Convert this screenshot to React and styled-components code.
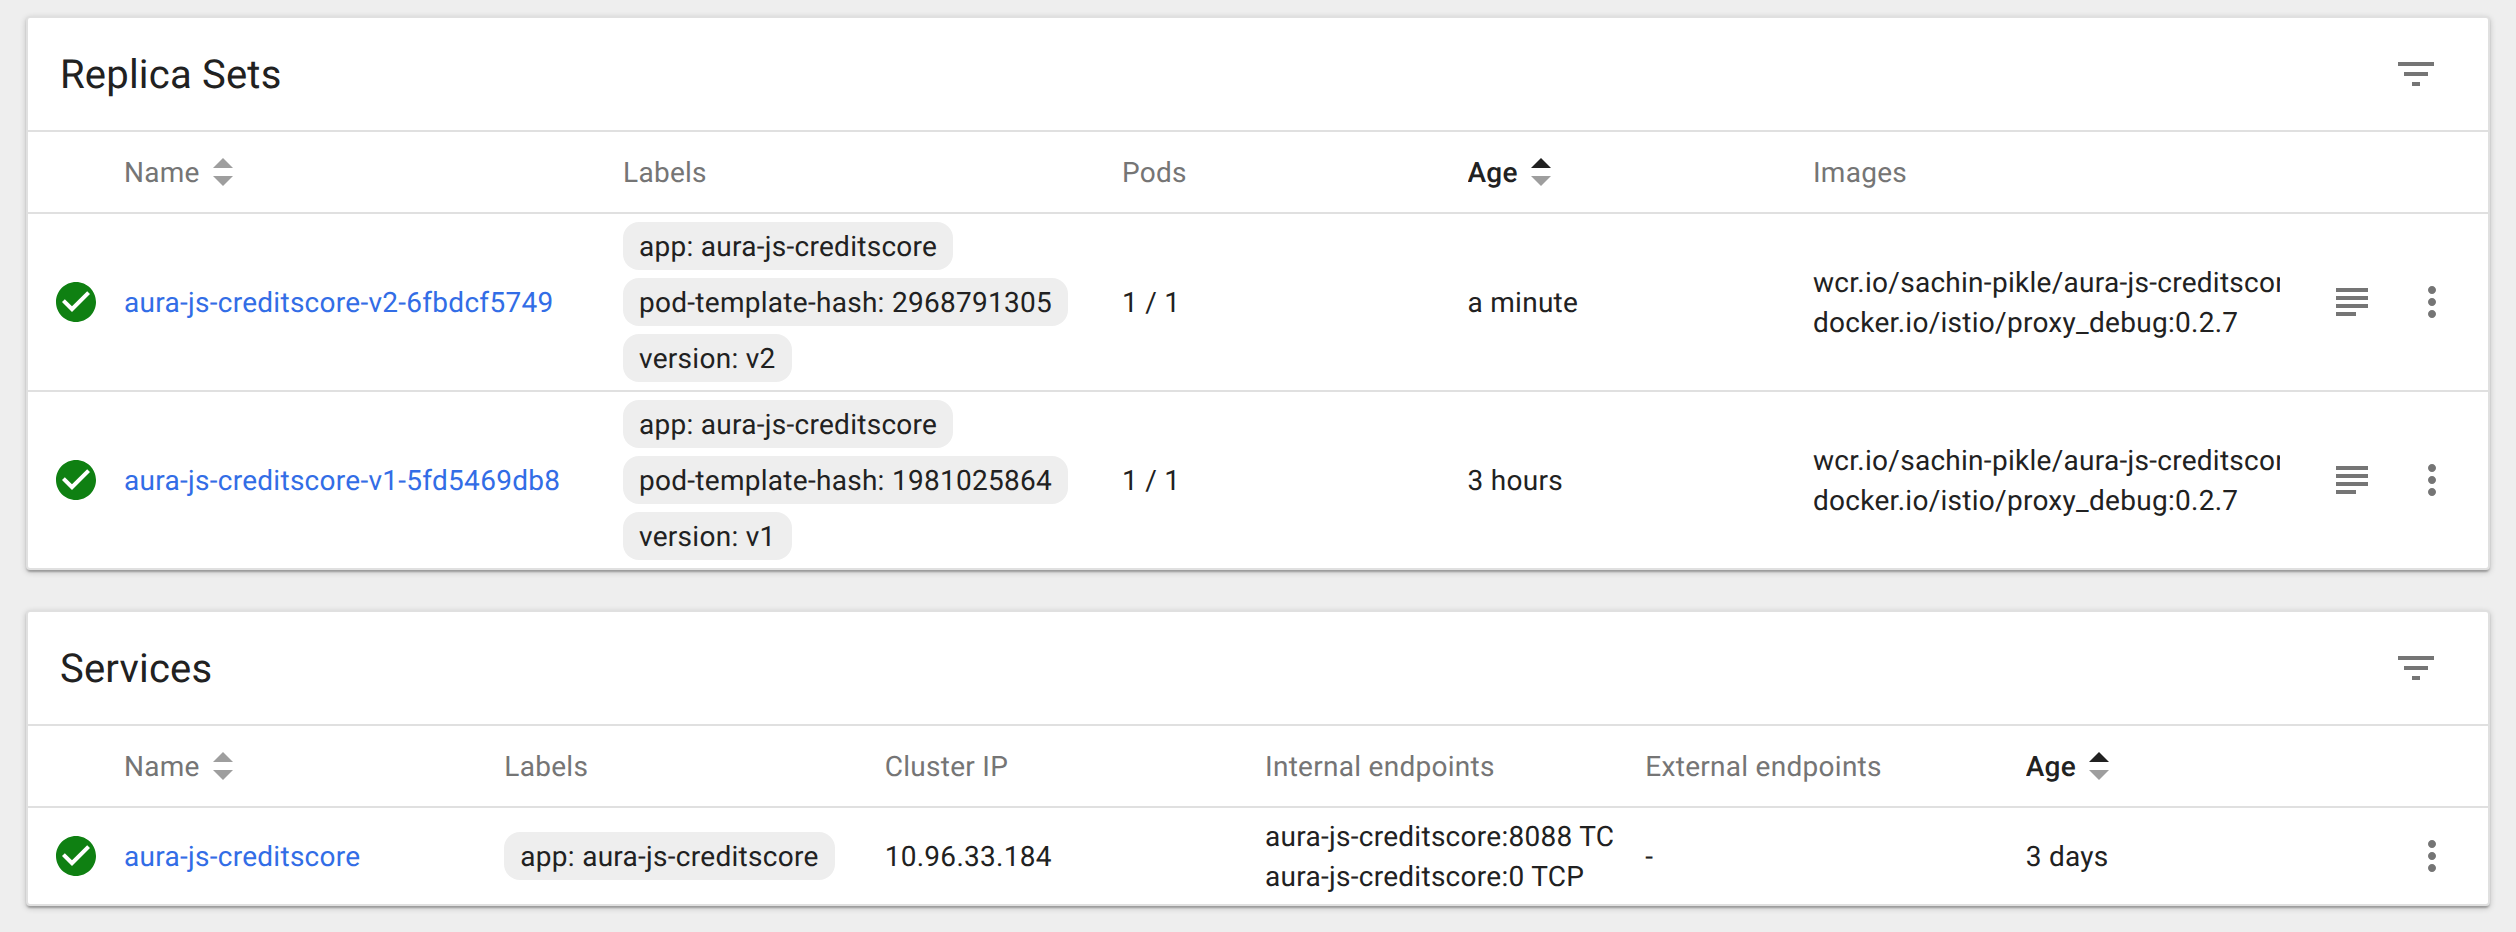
import React from "react";
import styled, { createGlobalStyle } from "styled-components";

const GlobalStyle = createGlobalStyle`
  body {
    margin: 0;
    background: #eeeeee;
    color: #212121;
    font: 400 28px/40px Roboto, sans-serif;
    letter-spacing: 0.01em;
    text-rendering: geometricPrecision;
  }
`;

const Page = styled.main`
  box-sizing: border-box;
  min-height: 932px;
  padding: 16px 26px 26px;
  display: flex;
  flex-direction: column;
  gap: 40px;
`;

const Card = styled.section`
  background: #fff;
  border: 2px solid #e0e0e0;
  border-radius: 4px;
  box-shadow: 0 2px 6px rgba(0, 0, 0, 0.2), 0 2px 2px rgba(0, 0, 0, 0.14), 0 4px 2px -2px rgba(0, 0, 0, 0.12);
`;

const CardHeader = styled.header`
  height: 112px;
  padding: 0 54px 0 32px;
  display: flex;
  align-items: center;
  justify-content: space-between;
`;

const Title = styled.h2`
  margin: 0;
  padding-top: 2px;
  font-size: 40px;
  font-weight: 400;
  letter-spacing: 0.005em;
`;

const Row = styled.div`
  display: grid;
  grid-template-columns: ${(p) => p.$columns};
  align-items: center;
  border-top: 2px solid #e0e0e0;
  min-height: ${(p) => p.$height}px;
`;

const Cell = styled.div`
  min-width: 0;
  padding: 2px 32px 0 0;
  overflow: hidden;
  white-space: nowrap;
`;

const ChipCell = styled(Cell)`
  padding-top: 0;
`;

const HeadCell = styled(Cell)`
  padding-top: 0;
  display: flex;
  align-items: center;
  color: ${(p) => (p.$active ? "#212121" : "#757575")};
  font-weight: ${(p) => (p.$active ? 500 : 400)};
`;

const HeadLabel = styled.span`
  padding-top: 2px;
`;

const Line = styled.div`
  overflow: hidden;
`;

const StatusCell = styled.div`
  padding-left: 24px;
  display: flex;
`;

const Link = styled.a`
  color: #326de6;
  text-decoration: none;
`;

const Chips = styled.div`
  display: flex;
  flex-direction: column;
  align-items: flex-start;
  gap: 8px;
`;

const Chip = styled.span`
  height: 48px;
  line-height: 50px;
  padding: 0 16px;
  border-radius: 16px;
  background: #eeeeee;
`;

const Actions = styled.div`
  display: flex;
  justify-content: flex-end;
  gap: 32px;
  padding-right: 32px;
`;

const IconButton = styled.button`
  padding: 0;
  border: 0;
  background: none;
  color: #757575;
  display: flex;
`;

const SortIcon = styled.svg`
  margin-left: 13px;
  flex: none;
`;

const Icon = ({ d, color = "currentColor" }) => (
  <svg width="48" height="48" viewBox="0 0 24 24" fill={color}>
    <path d={d} />
  </svg>
);

const MORE =
  "M12 8c1.1 0 2-.9 2-2s-.9-2-2-2-2 .9-2 2 .9 2 2 2zm0 2c-1.1 0-2 .9-2 2s.9 2 2 2 2-.9 2-2-.9-2-2-2zm0 6c-1.1 0-2 .9-2 2s.9 2 2 2 2-.9 2-2-.9-2-2-2z";
const CHECK =
  "M12 2C6.48 2 2 6.48 2 12s4.48 10 10 10 10-4.48 10-10S17.52 2 12 2zm-2 15l-5-5 1.41-1.41L10 14.17l7.59-7.59L19 8l-9 9z";

const FilterIcon = () => (
  <svg width="36" height="24" viewBox="0 0 36 24" fill="currentColor">
    <path d="M0 0h36v4H0zM6 10h24v4H6zM14 20h8v4h-8z" />
  </svg>
);

const LogsIcon = () => (
  <svg width="48" height="48" viewBox="0 0 48 48" fill="currentColor">
    <path d="M8 10h32v4H8zM8 18h32v4H8zM8 26h32v4H8zM8 34h20v4H8z" />
  </svg>
);

const replicaColumns = "96px 13fr 13fr 9fr 9fr 13fr 176px";
const serviceColumns = "96px repeat(6, 1fr) 82px";

const replicaSets = [
  { name: "aura-js-creditscore-v2-6fbdcf5749", hash: "2968791305", version: "v2", age: "a minute" },
  { name: "aura-js-creditscore-v1-5fd5469db8", hash: "1981025864", version: "v1", age: "3 hours" },
];

function ColumnHead({ label, sort }) {
  return (
    <HeadCell $active={sort === "asc"}>
      <HeadLabel>{label}</HeadLabel>
      {sort && (
        <SortIcon width="20" height="28" viewBox="0 0 20 28">
          <path d="M0 10L10 0l10 10z" fill={sort === "asc" ? "#212121" : "#9e9e9e"} />
          <path d="M0 18l10 10 10-10z" fill="#9e9e9e" />
        </SortIcon>
      )}
    </HeadCell>
  );
}

function Header({ title }) {
  return (
    <CardHeader>
      <Title>{title}</Title>
      <IconButton aria-label="Filter">
        <FilterIcon />
      </IconButton>
    </CardHeader>
  );
}

const Status = () => (
  <StatusCell>
    <Icon d={CHECK} color="#0f8012" />
  </StatusCell>
);

const MoreButton = () => (
  <IconButton aria-label="Actions">
    <Icon d={MORE} />
  </IconButton>
);

export default function App() {
  return (
    <Page>
      <GlobalStyle />
      <Card>
        <Header title="Replica Sets" />
        <Row $columns={replicaColumns} $height={80}>
          <span />
          <ColumnHead label="Name" sort="none" />
          <ColumnHead label="Labels" />
          <ColumnHead label="Pods" />
          <ColumnHead label="Age" sort="asc" />
          <ColumnHead label="Images" />
        </Row>
        {replicaSets.map((r) => (
          <Row key={r.name} $columns={replicaColumns} $height={176}>
            <Status />
            <Cell>
              <Link>{r.name}</Link>
            </Cell>
            <ChipCell>
              <Chips>
                <Chip>app: aura-js-creditscore</Chip>
                <Chip>pod-template-hash: {r.hash}</Chip>
                <Chip>version: {r.version}</Chip>
              </Chips>
            </ChipCell>
            <Cell>1 / 1</Cell>
            <Cell>{r.age}</Cell>
            <Cell>
              <Line>wcr.io/sachin-pikle/aura-js-creditscore</Line>
              <Line>docker.io/istio/proxy_debug:0.2.7</Line>
            </Cell>
            <Actions>
              <IconButton aria-label="Logs">
                <LogsIcon />
              </IconButton>
              <MoreButton />
            </Actions>
          </Row>
        ))}
      </Card>
      <Card>
        <Header title="Services" />
        <Row $columns={serviceColumns} $height={80}>
          <span />
          <ColumnHead label="Name" sort="none" />
          <ColumnHead label="Labels" />
          <ColumnHead label="Cluster IP" />
          <ColumnHead label="Internal endpoints" />
          <ColumnHead label="External endpoints" />
          <ColumnHead label="Age" sort="asc" />
        </Row>
        <Row $columns={serviceColumns} $height={96}>
          <Status />
          <Cell>
            <Link>aura-js-creditscore</Link>
          </Cell>
          <ChipCell>
            <Chips>
              <Chip>app: aura-js-creditscore</Chip>
            </Chips>
          </ChipCell>
          <Cell>10.96.33.184</Cell>
          <Cell>
            <Line>aura-js-creditscore:8088 TCP</Line>
            <Line>aura-js-creditscore:0 TCP</Line>
          </Cell>
          <Cell>-</Cell>
          <Cell>3 days</Cell>
          <Actions>
            <MoreButton />
          </Actions>
        </Row>
      </Card>
    </Page>
  );
}
